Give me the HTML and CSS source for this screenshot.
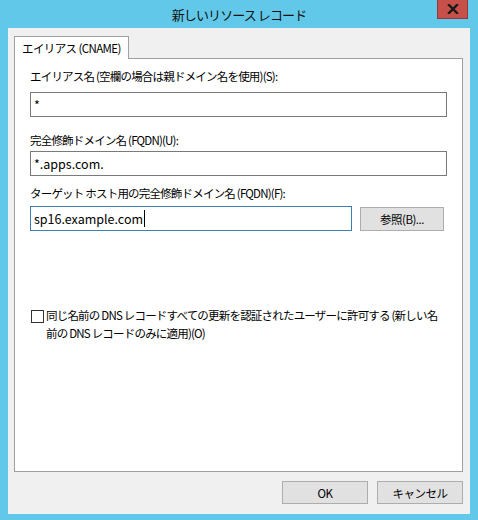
FILE: index.html
```html
<!DOCTYPE html>
<html lang="ja">
<head>
<meta charset="utf-8">
<link rel="stylesheet" href="styles.css">
</head>
<body>
<div class="window">
  <div class="titlebar">
    <div class="title">新しいリソース レコード</div>
    <div class="close">
      <svg width="12" height="10" viewBox="0 0 12 10"><path d="M2 1 L10 9 M10 1 L2 9" stroke="#1a1a1a" stroke-width="2.4" stroke-linecap="square"/></svg>
    </div>
  </div>
  <div class="client">
    <div class="tabs"><div class="tab">エイリアス (CNAME)</div></div>
    <div class="panel">
      <div class="label l1">エイリアス名 (空欄の場合は親ドメイン名を使用)(S):</div>
      <div class="input">*</div>
      <div class="label l2">完全修飾ドメイン名 (FQDN)(U):</div>
      <div class="input">*.apps.com.</div>
      <div class="label l3">ターゲット ホスト用の完全修飾ドメイン名 (FQDN)(F):</div>
      <div class="row">
        <div class="input active">sp16.example.com<span class="caret"></span></div>
        <div class="btn browse">参照(B)...</div>
      </div>
      <div class="check">
        <span class="box"></span>
        <span class="checktext">同じ名前の DNS レコードすべての更新を認証されたユーザーに許可する (新しい名<br>前の DNS レコードのみに適用)(O)</span>
      </div>
    </div>
    <div class="buttons">
      <div class="btn">OK</div>
      <div class="btn">キャンセル</div>
    </div>
  </div>
</div>
</body>
</html>
```
FILE: styles.css
```css
* { box-sizing: border-box; }
html, body { margin: 0; padding: 0; }
body {
  width: 478px;
  height: 520px;
  background: #62c8e9;
  font-family: "Noto Sans CJK JP", "Noto Sans", sans-serif;
  font-size: 11.5px;
  color: #000;
  overflow: hidden;
}
.window { width: 478px; height: 520px; display: flex; flex-direction: column; }
.titlebar {
  height: 28px;
  position: relative;
  display: flex;
  justify-content: center;
  align-items: center;
}
.title { font-size: 13px; letter-spacing: -0.9px; color: #111; padding-top: 1px; }
.close {
  position: absolute;
  right: 10px;
  top: 0;
  width: 31px;
  height: 19px;
  background: #c7504a;
  border: 1px solid #8e3a36;
  border-top: none;
  display: flex;
  align-items: center;
  justify-content: center;
}
.client {
  margin: 0 8px;
  height: 486px;
  background: #f0f0f0;
  padding: 8px 7px 0 6px;
  display: flex;
  flex-direction: column;
}
.tabs { display: flex; height: 22px; }
.tab {
  width: 115px;
  height: 23px;
  background: #fff;
  border: 1px solid #a0a0a0;
  border-bottom: none;
  padding: 3px 0 0 7px;
  letter-spacing: -0.6px;
  white-space: nowrap;
  position: relative;
  z-index: 1;
}
.panel {
  height: 414px;
  background: #fff;
  border: 1px solid #a0a0a0;
  padding: 9px 15px 0 15px;
  display: flex;
  flex-direction: column;
}
.label { line-height: 16px; height: 16px; letter-spacing: -0.8px; white-space: nowrap; }
.l1 { margin-bottom: 8px; }
.l2 { margin-top: 15px; margin-bottom: 3px; }
.l3 { margin-top: 9px; margin-bottom: 5px; }
.input {
  height: 25px;
  border: 1px solid #7a7a7a;
  padding: 2px 3px;
  font-size: 12.5px;
  line-height: 19px;
  background: #fff;
}
.input.active { border-color: #3f7fb0; width: 322px; display: flex; align-items: center; padding-top: 0; padding-bottom: 0; }
.caret { display: inline-block; width: 1px; height: 17px; background: #000; margin-left: 1px; }
.row { display: flex; align-items: flex-start; }
.btn {
  height: 24px;
  background: #e1e1e1;
  border: 1px solid #adadad;
  display: flex;
  align-items: center;
  justify-content: center;
  letter-spacing: -0.5px;
  white-space: nowrap;
}
.browse { width: 84px; margin-left: 8px; margin-top: 1px; }
.check {
  margin-top: 77px;
  display: flex;
  align-items: flex-start;
}
.box {
  flex: none;
  width: 13px;
  height: 13px;
  border: 1px solid #333;
  background: #fff;
  margin: 2px 2px 0 1px;
}
.checktext { line-height: 18px; letter-spacing: -0.8px; white-space: nowrap; margin-top: -2px; }
.buttons {
  display: flex;
  justify-content: flex-end;
  gap: 9px;
  margin-top: 9px;
}
.buttons .btn { width: 86px; height: 23px; }
```
